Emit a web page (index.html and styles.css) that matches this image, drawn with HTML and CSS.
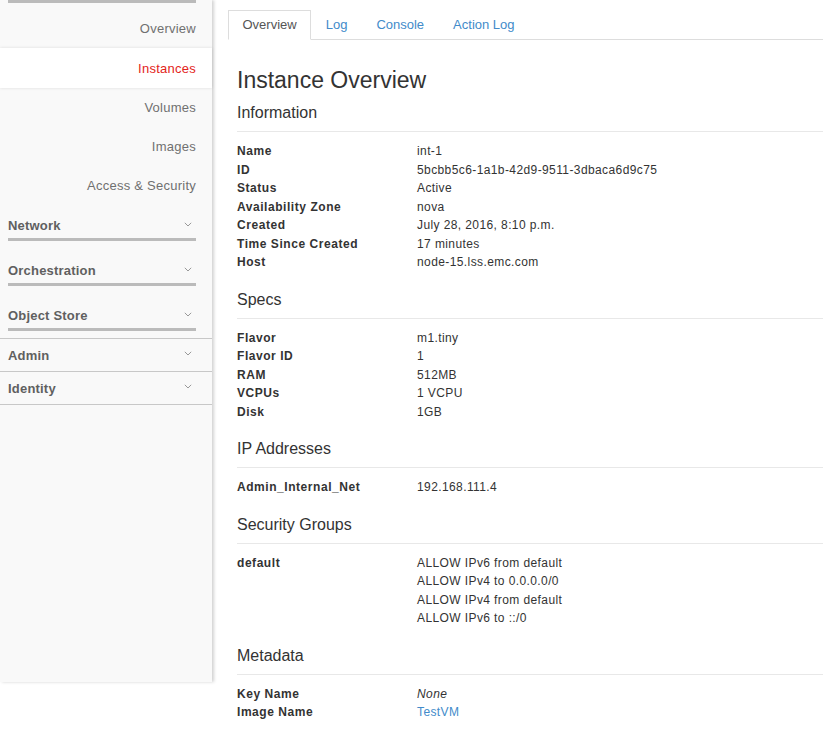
FILE: index.html
```html
<!DOCTYPE html>
<html>
<head>
<meta charset="utf-8">
<link rel="stylesheet" href="styles.css">
</head>
<body>
<div class="page">
  <nav class="sidebar">
    <div class="top-bar"></div>
    <ul class="panels">
      <li class="panel">Overview</li>
      <li class="panel active">Instances</li>
      <li class="panel">Volumes</li>
      <li class="panel">Images</li>
      <li class="panel">Access &amp; Security</li>
    </ul>
    <div class="group first">Network<svg class="caret" width="8" height="5" viewBox="0 0 8 5"><polyline points="0.8,0.8 4,4 7.2,0.8"/></svg></div>
    <div class="group">Orchestration<svg class="caret" width="8" height="5" viewBox="0 0 8 5"><polyline points="0.8,0.8 4,4 7.2,0.8"/></svg></div>
    <div class="group">Object Store<svg class="caret" width="8" height="5" viewBox="0 0 8 5"><polyline points="0.8,0.8 4,4 7.2,0.8"/></svg></div>
    <div class="dashboards">
      <div class="dash">Admin<svg class="caret" width="8" height="5" viewBox="0 0 8 5"><polyline points="0.8,0.8 4,4 7.2,0.8"/></svg></div>
      <div class="dash">Identity<svg class="caret" width="8" height="5" viewBox="0 0 8 5"><polyline points="0.8,0.8 4,4 7.2,0.8"/></svg></div>
    </div>
  </nav>
  <main class="content">
    <ul class="tabs">
      <li class="tab active">Overview</li>
      <li class="tab">Log</li>
      <li class="tab">Console</li>
      <li class="tab">Action Log</li>
    </ul>
    <div class="detail">
      <h1 class="title">Instance Overview</h1>

      <h3 class="section">Information</h3>
      <dl class="props">
        <dt>Name</dt><dd>int-1</dd>
        <dt>ID</dt><dd>5bcbb5c6-1a1b-42d9-9511-3dbaca6d9c75</dd>
        <dt>Status</dt><dd>Active</dd>
        <dt>Availability Zone</dt><dd>nova</dd>
        <dt>Created</dt><dd>July 28, 2016, 8:10 p.m.</dd>
        <dt>Time Since Created</dt><dd>17 minutes</dd>
        <dt>Host</dt><dd>node-15.lss.emc.com</dd>
      </dl>

      <h3 class="section">Specs</h3>
      <dl class="props">
        <dt>Flavor</dt><dd>m1.tiny</dd>
        <dt>Flavor ID</dt><dd>1</dd>
        <dt>RAM</dt><dd>512MB</dd>
        <dt>VCPUs</dt><dd>1 VCPU</dd>
        <dt>Disk</dt><dd>1GB</dd>
      </dl>

      <h3 class="section">IP Addresses</h3>
      <dl class="props">
        <dt>Admin_Internal_Net</dt><dd>192.168.111.4</dd>
      </dl>

      <h3 class="section">Security Groups</h3>
      <dl class="props">
        <dt>default</dt>
        <dd>
          <div>ALLOW IPv6 from default</div>
          <div>ALLOW IPv4 to 0.0.0.0/0</div>
          <div>ALLOW IPv4 from default</div>
          <div>ALLOW IPv6 to ::/0</div>
        </dd>
      </dl>

      <h3 class="section">Metadata</h3>
      <dl class="props">
        <dt>Key Name</dt><dd><em>None</em></dd>
        <dt>Image Name</dt><dd><a class="link" href="#">TestVM</a></dd>
      </dl>
    </div>
  </main>
</div>
</body>
</html>
```

FILE: styles.css
```css
* { box-sizing: border-box; }
html, body { margin: 0; padding: 0; background: #fff; }
body {
  font-family: "Liberation Sans", Arial, sans-serif;
  color: #333;
  font-size: 12px;
}
.page {
  display: flex;
  align-items: flex-start;
  width: 823px;
  height: 740px;
  overflow: hidden;
}

/* Sidebar */
.sidebar {
  flex: 0 0 212px;
  width: 212px;
  height: 682px;
  background: #f9f9f9;
  box-shadow: 2px 0 3px rgba(0,0,0,0.18);
  position: relative;
  z-index: 1;
}
.top-bar {
  height: 3px;
  margin: 0 16px 0 8px;
  background: #bbb;
}
.panels {
  list-style: none;
  margin: 0;
  padding: 6px 0 0;
}
.panel {
  height: 39px;
  line-height: 39px;
  text-align: right;
  padding-right: 16px;
  font-size: 13px;
  letter-spacing: 0.25px;
  color: #707070;
}
.panel.active {
  height: 40px;
  line-height: 41px;
  background: #fff;
  color: #e3241b;
  box-shadow: 0 0 3px rgba(0,0,0,0.12);
}
.group {
  display: flex;
  align-items: center;
  justify-content: space-between;
  margin: 9px 16px 0 8px;
  padding: 13px 4px 4px 0;
  line-height: 16px;
  font-size: 13px;
  font-weight: bold;
  letter-spacing: 0.2px;
  color: #606060;
  border-bottom: 3px solid #bbb;
}
.group.first { margin-top: 0; }
.caret {
  display: block;
  margin-top: -3px;
}
.caret polyline {
  fill: none;
  stroke: #999;
  stroke-width: 1;
}
.dashboards {
  margin-top: 7px;
  border-top: 1px solid #c8c8c8;
}
.dash {
  display: flex;
  align-items: center;
  justify-content: space-between;
  height: 33px;
  padding: 0 20px 0 8px;
  border-bottom: 1px solid #c8c8c8;
  font-size: 13px;
  font-weight: bold;
  letter-spacing: 0.2px;
  color: #606060;
}

/* Content */
.content {
  flex: 1;
  padding-left: 16px;
  min-width: 0;
}
.tabs {
  list-style: none;
  margin: 10px 0 0;
  padding: 0;
  display: flex;
  border-bottom: 1px solid #ddd;
}
.tab {
  height: 30px;
  line-height: 28px;
  padding: 0 13.5px;
  border: 1px solid transparent;
  margin-bottom: -1px;
  font-size: 13px;
  color: #428bca;
}
.tab.active {
  color: #555;
  border-color: #ddd;
  border-bottom-color: #fff;
  background: #fff;
}
.detail {
  padding-left: 9px;
}
.title {
  margin: 26px 0 0;
  font-size: 23px;
  line-height: 28px;
  font-weight: normal;
  color: #333;
}
.section {
  margin: 18px 0 0;
  padding-bottom: 8px;
  font-size: 16px;
  line-height: 20px;
  font-weight: normal;
  color: #333;
  border-bottom: 1px solid #e8e8e8;
}
.title + .section { margin-top: 9px; }
.props {
  margin: 10px 0 0;
  display: grid;
  grid-template-columns: 180px 1fr;
  line-height: 18.5px;
  font-size: 12px;
  letter-spacing: 0.4px;
}
.props dt {
  font-weight: bold;
  letter-spacing: 0.55px;
  color: #333;
}
.props dd {
  margin: 0;
  color: #333;
}
.link {
  color: #428bca;
  text-decoration: none;
}
```
